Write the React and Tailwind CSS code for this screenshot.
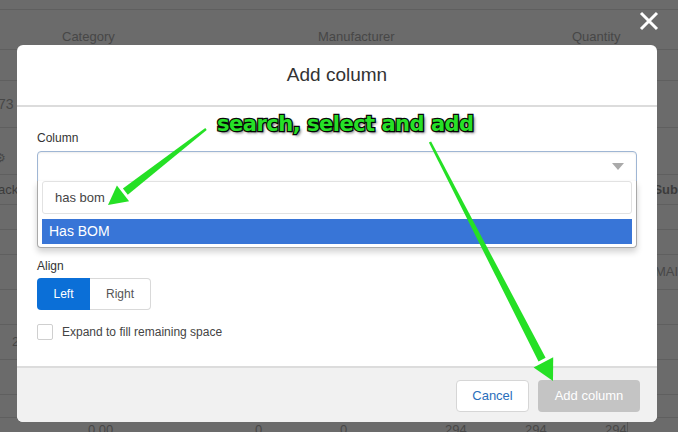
import React from "react";

const font = { fontFamily: '"Liberation Sans", Arial, sans-serif' };

function Arrow({ tail, tip, head = 22, half = 10, wt = 1.5, wb = 4 }) {
  const dx = tip[0] - tail[0];
  const dy = tip[1] - tail[1];
  const len = Math.hypot(dx, dy);
  const ux = dx / len;
  const uy = dy / len;
  const nx = -uy;
  const ny = ux;
  const bx = tip[0] - ux * head;
  const by = tip[1] - uy * head;
  const p = (x, y) => `${x.toFixed(1)},${y.toFixed(1)}`;
  const shaft = [
    p(tail[0] + nx * wt, tail[1] + ny * wt),
    p(bx + nx * wb, by + ny * wb),
    p(bx - nx * wb, by - ny * wb),
    p(tail[0] - nx * wt, tail[1] - ny * wt),
  ].join(" ");
  const tipPts = [
    p(tip[0], tip[1]),
    p(bx + nx * half + ux * 3, by + ny * half + uy * 3),
    p(bx - nx * half + ux * 3, by - ny * half + uy * 3),
  ].join(" ");
  return (
    <g fill="#25e025">
      <polygon points={shaft} />
      <polygon points={tipPts} />
    </g>
  );
}

function BgRow({ h, children, className = "" }) {
  return (
    <div
      className={"flex border-b border-[#5f5f5f] " + className}
      style={{ height: h }}
    >
      {children}
    </div>
  );
}

export default function App() {
  return (
    <div
      className="relative w-[678px] h-[432px] overflow-hidden bg-[#6b6b6b] text-[13px] text-[#474747]"
      style={font}
    >
      {/* dimmed page behind the dialog */}
      <div className="flex flex-col">
        <BgRow h={10} />
        <BgRow h={40} className="items-end pb-[3px]">
          <span className="pl-[62px] w-[318px]">Category</span>
          <span className="w-[254px]">Manufacturer</span>
          <span>Quantity</span>
        </BgRow>
        <BgRow h={31} />
        <BgRow h={47} className="items-center">
          <span className="-ml-[2px] text-[14px]">73</span>
        </BgRow>
        <BgRow h={47} className="items-end pb-[7px]">
          <span className="-ml-[5px] text-[12px]">⚙</span>
        </BgRow>
        <BgRow h={30} className="items-center font-bold text-[#3c3c3c]">
          <span className="-ml-[2px] w-[662px] font-normal">ack</span>
          <span>Sub</span>
        </BgRow>
        <BgRow h={25} />
        <BgRow h={25} />
        <BgRow h={35} className="items-center">
          <span className="w-[656px]"></span>
          <span>MAI</span>
        </BgRow>
        <BgRow h={35} />
        <BgRow h={35} className="items-center">
          <span className="pl-[12px]">2</span>
        </BgRow>
        <BgRow h={35} />
        <BgRow h={23} />
        <div className="flex h-[30px] items-start pt-[2px]">
          <span className="pl-[88px] w-[255px]">0.00</span>
          <span className="w-[85px]">0</span>
          <span className="w-[105px]">0</span>
          <span className="w-[80px]">294</span>
          <span className="w-[80px]">294</span>
          <span className="w-[23px] border-r border-[#555]">294</span>
        </div>
      </div>

      {/* close X */}
      <svg
        className="absolute left-[639px] top-[11px]"
        width="20"
        height="20"
        viewBox="0 0 20 20"
      >
        <path d="M2 2 L18 18 M18 2 L2 18" stroke="#ffffff" strokeWidth="3" />
      </svg>

      {/* dialog */}
      <div className="absolute left-[17px] top-[45px] w-[640px] h-[377px] rounded-md bg-white flex flex-col">
        <div className="h-[62px] shrink-0 flex items-center justify-center border-b-2 border-[#dcdcdc] text-[19px] text-[#333]">
          Add column
        </div>
        <div className="flex-1 px-[20px] pt-[22px] text-[12px] text-[#333]">
          <div className="mb-[4px]">Column</div>
          <div className="relative">
            <div className="h-[31px] rounded-t-[4px] border border-[#9fb6d4] bg-white flex items-center justify-end pr-[12px] shadow-[inset_0_1px_2px_rgba(0,0,0,0.08)]">
              <svg width="12" height="8" viewBox="0 0 12 8">
                <path d="M0 0 L12 0 L6 7 Z" fill="#aaaaaa" />
              </svg>
            </div>
            <div className="absolute left-0 right-0 top-[30px] z-10 h-[67px] bg-white border border-t-0 border-[#a9a9a9] rounded-b-[4px] shadow-[0_4px_6px_rgba(0,0,0,0.18)] px-[4px]">
              <div className="h-[33px] border border-[#e2e2e2] rounded-[3px] flex items-center pl-[12px] text-[13px] text-[#444]">
                has bom
              </div>
              <div className="mt-[5px] h-[25px] bg-[#3875d7] flex items-center pl-[7px] text-[14px] text-white">
                Has BOM
              </div>
            </div>
          </div>
          <div className="mt-[75px] mb-[3px]">Align</div>
          <div className="flex h-[32px] w-[114px]">
            <div className="w-[53px] rounded-l-[4px] bg-[#0b6fd7] text-white flex items-center justify-center">
              Left
            </div>
            <div className="flex-1 rounded-r-[4px] border border-l-0 border-[#d9d9d9] text-[#555] flex items-center justify-center">
              Right
            </div>
          </div>
          <div className="mt-[13px] flex items-center">
            <div className="w-[16px] h-[16px] rounded-[2px] border border-[#cfcfcf] bg-white" />
            <span className="ml-[9px] text-[#444]">Expand to fill remaining space</span>
          </div>
        </div>
        <div className="h-[56px] shrink-0 border-t-2 border-[#dcdcdc] bg-[#f1f1f1] rounded-b-md flex items-start justify-end gap-[9px] pt-[12px] pr-[17px] text-[13px]">
          <div className="w-[73px] h-[32px] rounded-[4px] border border-[#d6d6d6] bg-white text-[#2a6ebb] flex items-center justify-center">
            Cancel
          </div>
          <div className="w-[102px] h-[32px] rounded-[4px] bg-[#c4c4c4] text-white flex items-center justify-center">
            Add column
          </div>
        </div>
      </div>

      {/* annotation */}
      <div
        className="absolute left-[217px] top-[109px] z-20 text-[21px] font-bold text-[#27e027] tracking-[-0.5px] [-webkit-text-stroke:2.5px_#0a0a0a] [paint-order:stroke_fill] [text-shadow:2px_2px_3px_rgba(0,0,0,0.6)] whitespace-nowrap"
        style={{ fontFamily: '"DejaVu Sans", "Liberation Sans", sans-serif' }}
      >
        search, select and add
      </div>
      <svg
        className="absolute inset-0 z-20 pointer-events-none"
        width="678"
        height="432"
        viewBox="0 0 678 432"
      >
        <Arrow tail={[206, 129]} tip={[108, 205]} head={22} half={10} wt={1.2} wb={4} />
        <Arrow tail={[430, 142]} tip={[553, 381]} head={24} half={11} wt={1.2} wb={4} />
      </svg>
    </div>
  );
}
